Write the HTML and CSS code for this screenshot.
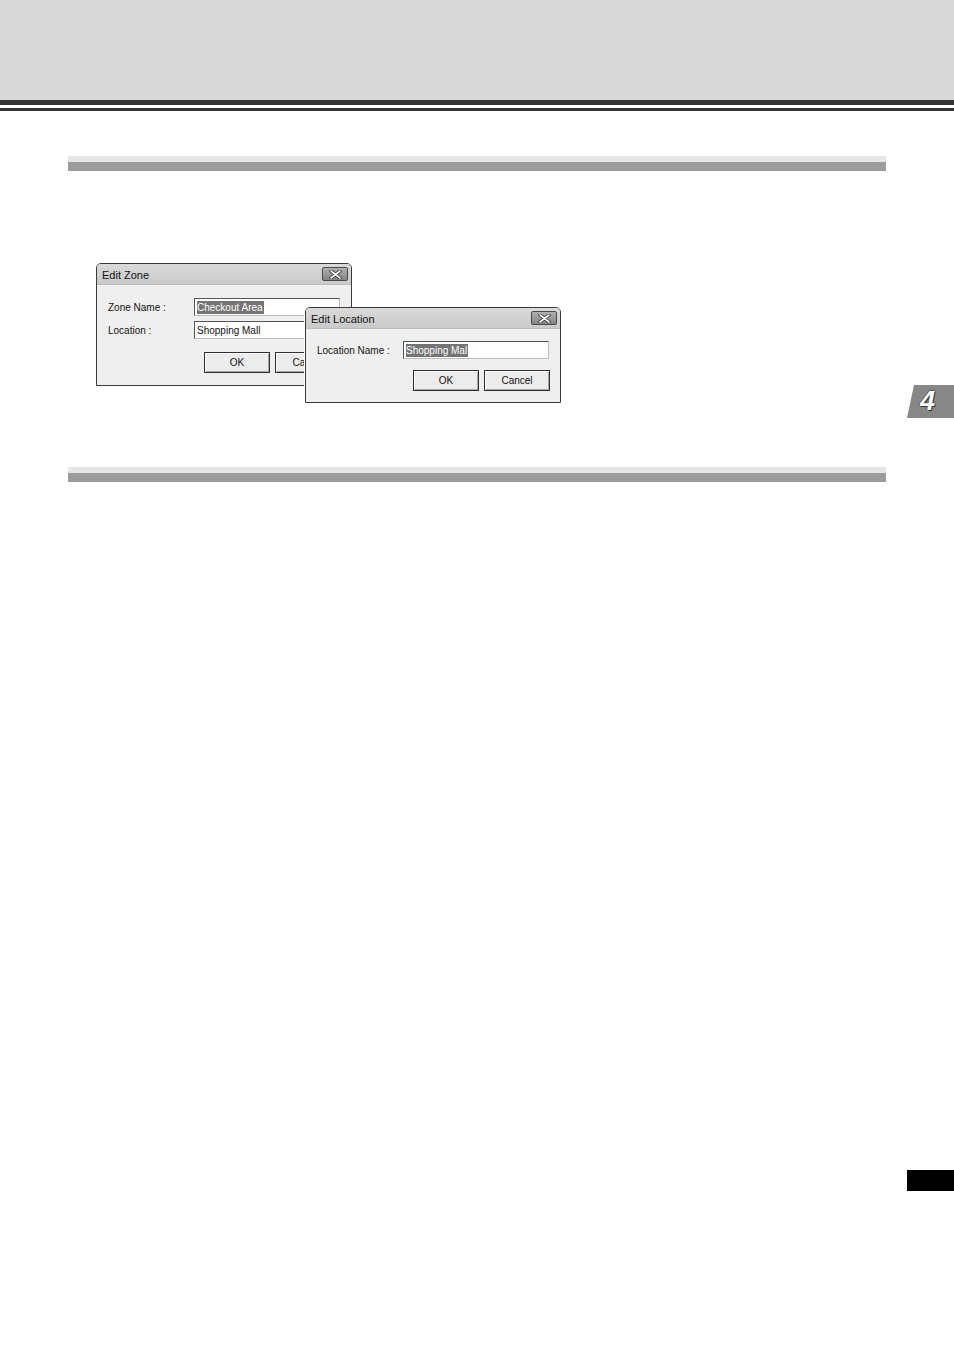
FILE: index.html
```html
<!DOCTYPE html>
<html>
<head>
<meta charset="utf-8">
<link rel="stylesheet" href="styles.css">
</head>
<body>
<header class="top">
  <div class="top-fill"></div>
  <div class="top-rule"></div>
</header>
<main class="content">
  <div class="section-bar"></div>
  <div class="figure">
    <div class="dialog dialog-zone">
      <div class="titlebar">
        <span class="title">Edit Zone</span>
        <span class="close"><svg width="13" height="9" viewBox="0 0 13 9"><path d="M2 1 L11 8 M11 1 L2 8" stroke="#333" stroke-width="3.4" stroke-linecap="round"/><path d="M2 1 L11 8 M11 1 L2 8" stroke="#fff" stroke-width="1.6" stroke-linecap="round"/></svg></span>
      </div>
      <div class="dbody">
        <div class="row"><span class="label">Zone Name :</span><span class="input"><span class="sel">Checkout Area</span></span></div>
        <div class="row"><span class="label">Location :</span><span class="input">Shopping Mall</span></div>
        <div class="buttons"><span class="btn">OK</span><span class="btn">Cancel</span></div>
      </div>
    </div>
    <div class="dialog dialog-loc">
      <div class="titlebar">
        <span class="title">Edit Location</span>
        <span class="close"><svg width="13" height="9" viewBox="0 0 13 9"><path d="M2 1 L11 8 M11 1 L2 8" stroke="#333" stroke-width="3.4" stroke-linecap="round"/><path d="M2 1 L11 8 M11 1 L2 8" stroke="#fff" stroke-width="1.6" stroke-linecap="round"/></svg></span>
      </div>
      <div class="dbody">
        <div class="row"><span class="label">Location Name :</span><span class="input"><span class="sel">Shopping Mal</span></span></div>
        <div class="buttons"><span class="btn">OK</span><span class="btn">Cancel</span></div>
      </div>
    </div>
  </div>
  <div class="section-bar second"></div>
</main>
<div class="chapter-tab"><span>4</span></div>
<div class="page-mark"></div>
</body>
</html>
```
FILE: styles.css
```css
html, body {
  margin: 0;
  padding: 0;
  background: #fff;
}
body {
  position: relative;
  width: 954px;
  height: 1348px;
  overflow: hidden;
  font-family: "DejaVu Sans", "Liberation Sans", sans-serif;
}
.top-fill {
  height: 100px;
  background: #d9d9d9;
  border-bottom: 5px solid #333;
}
.top-rule {
  margin-top: 3px;
  height: 3px;
  background: #333;
}
.content {
  padding: 0 68px;
}
.section-bar {
  margin-top: 45px;
  height: 9px;
  border-top: 6px solid #e6e6e6;
  background: #9c9c9c;
}
.section-bar.second {
  margin-top: 64px;
}
.figure {
  position: relative;
  margin: 92px 0 0 28px;
  height: 140px;
}
.dialog {
  box-sizing: border-box;
  border: 1px solid #3a3a3a;
  border-radius: 5px 5px 0 0;
  background: #efefef;
  font-family: "Liberation Sans", Arial, sans-serif;
  font-size: 10px;
  color: #111;
  overflow: hidden;
}
.dialog-zone {
  width: 256px;
  height: 123px;
}
.dialog-loc {
  position: absolute;
  left: 209px;
  top: 44px;
  width: 256px;
  height: 96px;
  box-shadow: -1px 0 0 #fff;
}
.titlebar {
  height: 20px;
  display: flex;
  align-items: center;
  justify-content: space-between;
  padding: 0 3px 0 5px;
  background: linear-gradient(#dadada, #c9c9c9);
  border-bottom: 1px solid #bdbdbd;
}
.title {
  font-size: 11px;
  color: #111;
  padding-top: 1px;
}
.close {
  width: 24px;
  height: 12px;
  border: 1px solid #4a4a4a;
  border-radius: 2px;
  background: linear-gradient(#b0b0b0, #858585);
  display: flex;
  align-items: center;
  justify-content: center;
}
.dbody {
  padding: 13px 10px 0 11px;
}
.dialog-loc .dbody {
  padding-top: 12px;
}
.row {
  display: flex;
  align-items: center;
  height: 18px;
  margin-bottom: 5px;
}
.label {
  width: 86px;
  flex: none;
  padding-top: 1px;
}
.input {
  box-sizing: border-box;
  width: 146px;
  height: 18px;
  background: #fff;
  border: 1px solid #bcbcbc;
  border-top-color: #555;
  border-left-color: #555;
  padding: 0 2px;
  display: flex;
  align-items: center;
  white-space: nowrap;
  overflow: hidden;
}
.sel {
  background: #747474;
  color: #fff;
  line-height: 13px;
  padding-right: 1px;
}
.buttons {
  display: flex;
  justify-content: flex-end;
  gap: 5px;
  margin-top: 13px;
}
.dialog-loc .buttons {
  margin-top: 11px;
}
.btn {
  box-sizing: border-box;
  width: 66px;
  height: 21px;
  border: 1px solid #2f2f2f;
  box-shadow: inset 1px 1px 0 #fff, inset -1px -1px 0 #a8a8a8;
  background: #ececec;
  display: flex;
  align-items: center;
  justify-content: center;
}
.chapter-tab {
  position: absolute;
  left: 907px;
  top: 385px;
  width: 47px;
  height: 33px;
  background: #878787;
  clip-path: polygon(7px 0, 47px 0, 47px 33px, 0 33px);
  display: flex;
  align-items: center;
  justify-content: center;
}
.chapter-tab span {
  font-family: "Liberation Sans", Arial, sans-serif;
  font-weight: bold;
  font-style: italic;
  font-size: 27px;
  color: #fff;
  margin-left: -6px;
  text-shadow: 1px 1px 0 #333, -1px 0 0 #555, 0 -1px 0 #555;
}
.page-mark {
  position: absolute;
  left: 907px;
  top: 1170px;
  width: 47px;
  height: 21px;
  background: #000;
}
```
